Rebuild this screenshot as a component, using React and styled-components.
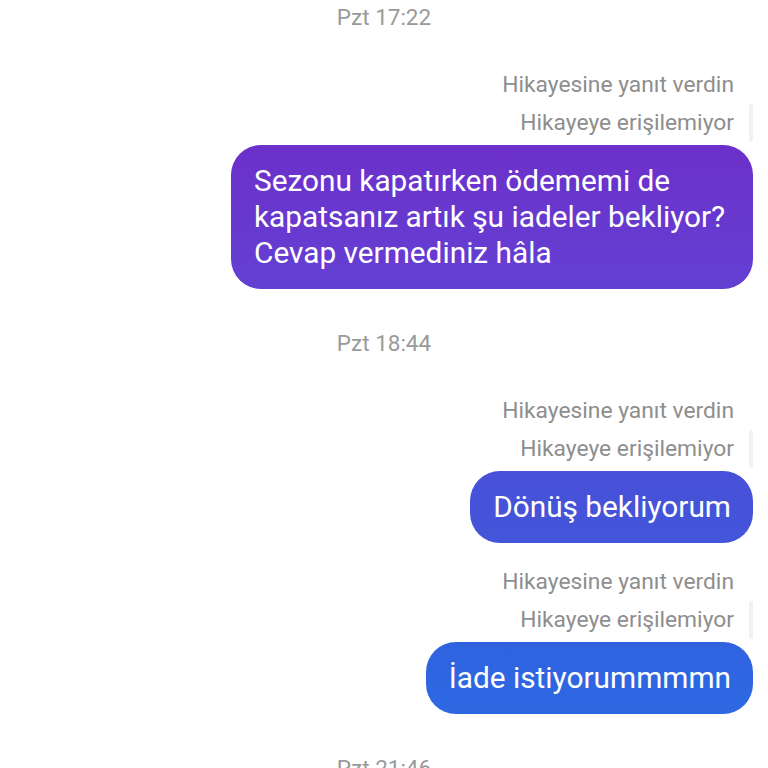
import React from "react";
import styled, { createGlobalStyle } from "styled-components";

const Global = createGlobalStyle`
  html, body { margin: 0; padding: 0; background: #ffffff; }
  body { font-family: Roboto, "Noto Sans", "Liberation Sans", sans-serif; }
`;

const Thread = styled.div`
  width: 768px;
  height: 768px;
  overflow: hidden;
  display: flex;
  flex-direction: column;
  padding-right: 15px;
  box-sizing: border-box;
`;

const Stamp = styled.div`
  height: 34px;
  line-height: 34px;
  text-align: center;
  font-size: 22.5px;
  color: #9a9a9a;
  margin-top: ${(p) => p.$top || 0}px;
  padding-left: 15px;
`;

const Meta = styled.div`
  display: flex;
  justify-content: flex-end;
  align-items: flex-end;
  margin-top: ${(p) => p.$top || 0}px;
  gap: 15px;
`;

const MetaLines = styled.div`
  display: flex;
  flex-direction: column;
  align-items: flex-end;
`;

const MetaLine = styled.div`
  height: 38px;
  line-height: 38px;
  font-size: 22.8px;
  color: #8e8e8e;
`;

const StoryBar = styled.div`
  width: 4px;
  height: 38px;
  background: #f1f1f1;
  border-radius: 2px;
`;

const Row = styled.div`
  display: flex;
  justify-content: flex-end;
  margin-top: 3px;
`;

const Bubble = styled.div`
  max-width: 522px;
  box-sizing: border-box;
  padding: 18px 22px 18px 23px;
  border-radius: 30px;
  color: #ffffff;
  font-size: 29.8px;
  line-height: 36px;
  background: ${(p) => p.$bg};
`;

function StoryMeta({ top }) {
  return (
    <Meta $top={top}>
      <MetaLines>
        <MetaLine>Hikayesine yanıt verdin</MetaLine>
        <MetaLine>Hikayeye erişilemiyor</MetaLine>
      </MetaLines>
      <StoryBar />
    </Meta>
  );
}

export default function App() {
  return (
    <>
      <Global />
      <Thread>
        <Stamp>Pzt 17:22</Stamp>
        <StoryMeta top={32} />
        <Row>
          <Bubble $bg="linear-gradient(180deg, #6c30ca 0%, #6340d3 100%)">
            Sezonu kapatırken ödememi de kapatsanız artık şu iadeler bekliyor? Cevap vermediniz hâla
          </Bubble>
        </Row>
        <Stamp $top={37}>Pzt 18:44</Stamp>
        <StoryMeta top={32} />
        <Row>
          <Bubble $bg="linear-gradient(180deg, #4750d8 0%, #4356da 100%)">Dönüş bekliyorum</Bubble>
        </Row>
        <StoryMeta top={20} />
        <Row>
          <Bubble $bg="linear-gradient(180deg, #3062df 0%, #2d69e2 100%)">İade istiyorummmmn</Bubble>
        </Row>
        <Stamp $top={37}>Pzt 21:46</Stamp>
      </Thread>
    </>
  );
}
